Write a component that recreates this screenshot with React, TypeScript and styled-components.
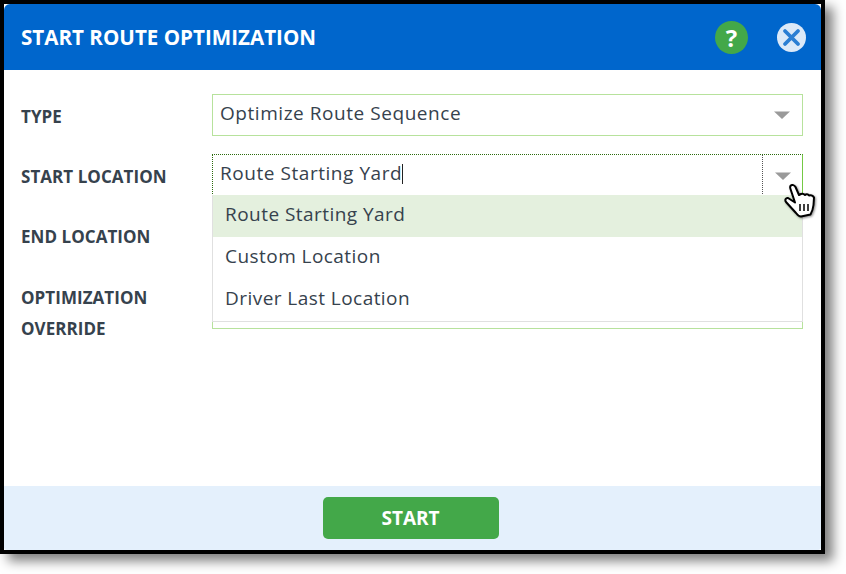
import React from "react";
import styled, { createGlobalStyle } from "styled-components";

const GlobalStyle = createGlobalStyle`
  html, body {
    margin: 0;
    padding: 0;
    background: #fff;
  }
  body {
    font-family: "Open Sans", "Noto Sans", sans-serif;
    color: #36424d;
  }
`;

const Page = styled.div`
  width: 846px;
  height: 574px;
  overflow: hidden;
`;

const Dialog = styled.div`
  box-sizing: border-box;
  width: 825px;
  height: 554px;
  border: 4px solid #000;
  background: #fff;
  display: flex;
  flex-direction: column;
  box-shadow: 8px 7px 11px rgba(0, 0, 0, 0.5);
`;

const Header = styled.header`
  box-sizing: border-box;
  height: 66px;
  flex: none;
  display: flex;
  align-items: center;
  padding: 0 15px 0 17px;
  background: #0066cc;
  border-radius: 6px 6px 0 0;
`;

const Title = styled.h1`
  flex: 1;
  margin: 0;
  color: #fff;
  font-size: 20.6px;
  font-weight: 700;
`;

const HelpButton = styled.div`
  width: 33px;
  height: 33px;
  border-radius: 50%;
  margin-right: 29px;
  background: #43a849;
  color: #fff;
  display: flex;
  align-items: center;
  justify-content: center;
  font-size: 24px;
  font-weight: 700;
`;

const CloseButton = styled.svg`
  display: block;
  width: 29px;
  height: 29px;
`;

const Body = styled.main`
  box-sizing: border-box;
  flex: 1;
  position: relative;
  padding: 24px 18px 0 17px;
  display: flex;
  flex-direction: column;
  gap: 18px;
`;

const Row = styled.div`
  display: grid;
  grid-template-columns: 191px 1fr;
`;

const Label = styled.label<{ $tall?: boolean }>`
  font-size: 17px;
  font-weight: 700;
  letter-spacing: 0.05px;
  line-height: ${(p) => (p.$tall ? "31px" : "42px")};
  padding-top: ${(p) => (p.$tall ? "8px" : "2px")};
  height: 40px;
`;

const Field = styled.div<{ $height?: number; $focused?: boolean }>`
  box-sizing: border-box;
  height: ${(p) => p.$height ?? 42}px;
  display: flex;
  align-items: center;
  border: 1px solid #b7e29c;
  font-size: 19px;
  padding-left: 7px;
  padding-bottom: 5px;
  letter-spacing: 0.55px;
  ${(p) =>
    p.$focused &&
    `
    border-color: #2b6a0c;
    border-style: dotted;
    border-right: 1px solid #74c944;
    border-bottom: none;
  `}
`;

const FieldText = styled.span`
  flex: 1;
`;

const Caret = styled.span`
  display: inline-block;
  width: 1px;
  height: 20px;
  background: #222;
  vertical-align: -4px;
`;

const ArrowCell = styled.div<{ $divided?: boolean }>`
  box-sizing: border-box;
  width: 40px;
  align-self: stretch;
  margin-bottom: -5px;
  display: flex;
  align-items: center;
  justify-content: center;
  ${(p) => p.$divided && "border-left: 1px dotted #555;"}
`;

const Arrow = styled.svg`
  display: block;
  width: 16px;
  height: 8px;
`;

const Menu = styled.ul`
  box-sizing: border-box;
  position: absolute;
  left: 208px;
  top: 125px;
  width: 591px;
  height: 127px;
  margin: 0;
  padding: 0;
  list-style: none;
  background: #fff;
  border: 1px solid #e0e0e0;
  border-top: none;
`;

const MenuItem = styled.li<{ $selected?: boolean }>`
  height: 42px;
  line-height: 39px;
  padding-left: 12px;
  font-size: 19px;
  letter-spacing: 0.45px;
  background: ${(p) => (p.$selected ? "#e4f0de" : "#fff")};
`;

const Pointer = styled.svg`
  position: absolute;
  left: 780px;
  top: 114px;
  width: 34px;
  height: 36px;
  overflow: visible;
  filter: drop-shadow(1px 1px 1px rgba(0, 0, 0, 0.45));
`;

const Footer = styled.footer`
  box-sizing: border-box;
  height: 64px;
  flex: none;
  display: flex;
  align-items: center;
  justify-content: center;
  padding-right: 4px;
  background: #e4f0fc;
  border-radius: 0 0 3px 3px;
`;

const StartButton = styled.button`
  width: 176px;
  height: 42px;
  border: none;
  border-radius: 5px;
  background: #43a849;
  color: #fff;
  font-family: inherit;
  font-size: 19px;
  font-weight: 700;
`;

const DownArrow = () => (
  <Arrow viewBox="0 0 16 8">
    <path d="M0 0.5h16L8 8z" fill="#9a9a9a" />
  </Arrow>
);

export default function App() {
  return (
    <Page>
      <GlobalStyle />
      <Dialog>
        <Header>
          <Title>START ROUTE OPTIMIZATION</Title>
          <HelpButton>?</HelpButton>
          <CloseButton viewBox="0 0 29 29">
            <circle cx="14.500" cy="14.500" r="14.500" fill="#dbe9f8" />
            <path
              d="M8 8l13 13M21 8L8 21"
              stroke="#2a7ed3"
              strokeWidth="3.800"
              strokeLinecap="round"
            />
          </CloseButton>
        </Header>
        <Body>
          <Row>
            <Label>TYPE</Label>
            <Field>
              <FieldText>Optimize Route Sequence</FieldText>
              <ArrowCell>
                <DownArrow />
              </ArrowCell>
            </Field>
          </Row>
          <Row>
            <Label>START LOCATION</Label>
            <Field $focused>
              <FieldText>
                Route Starting Yard
                <Caret />
              </FieldText>
              <ArrowCell $divided>
                <DownArrow />
              </ArrowCell>
            </Field>
          </Row>
          <Row>
            <Label>END LOCATION</Label>
            <Field />
          </Row>
          <Row>
            <Label $tall>
              OPTIMIZATION
              <br />
              OVERRIDE
            </Label>
            <Field $height={55} />
          </Row>
          <Menu>
            <MenuItem $selected>Route Starting Yard</MenuItem>
            <MenuItem>Custom Location</MenuItem>
            <MenuItem>Driver Last Location</MenuItem>
          </Menu>
          <Pointer viewBox="9 9 34 36">
            <path
              d="M16 10.500C17 9.500 19.500 10 20.500 12L24 20L26 19C27.500 18.500 29 19 30 20C31 19 33 19 34 20.500C35.500 20 38 20.500 39 22.500L38.500 30C38 34 37 37 35.500 39.500L26 41.500C24 41.500 22.500 40 21 38L11 27C9.500 25 11 22.500 13 23L20 27.500L15.500 14C15 12.500 15 11 16 10.500Z"
              fill="#fff"
              stroke="#000"
              strokeWidth="2"
              strokeLinejoin="round"
            />
            <path
              d="M25 29v7M29 29v7M33 29v7"
              stroke="#000"
              strokeWidth="1.500"
            />
          </Pointer>
        </Body>
        <Footer>
          <StartButton>START</StartButton>
        </Footer>
      </Dialog>
    </Page>
  );
}
